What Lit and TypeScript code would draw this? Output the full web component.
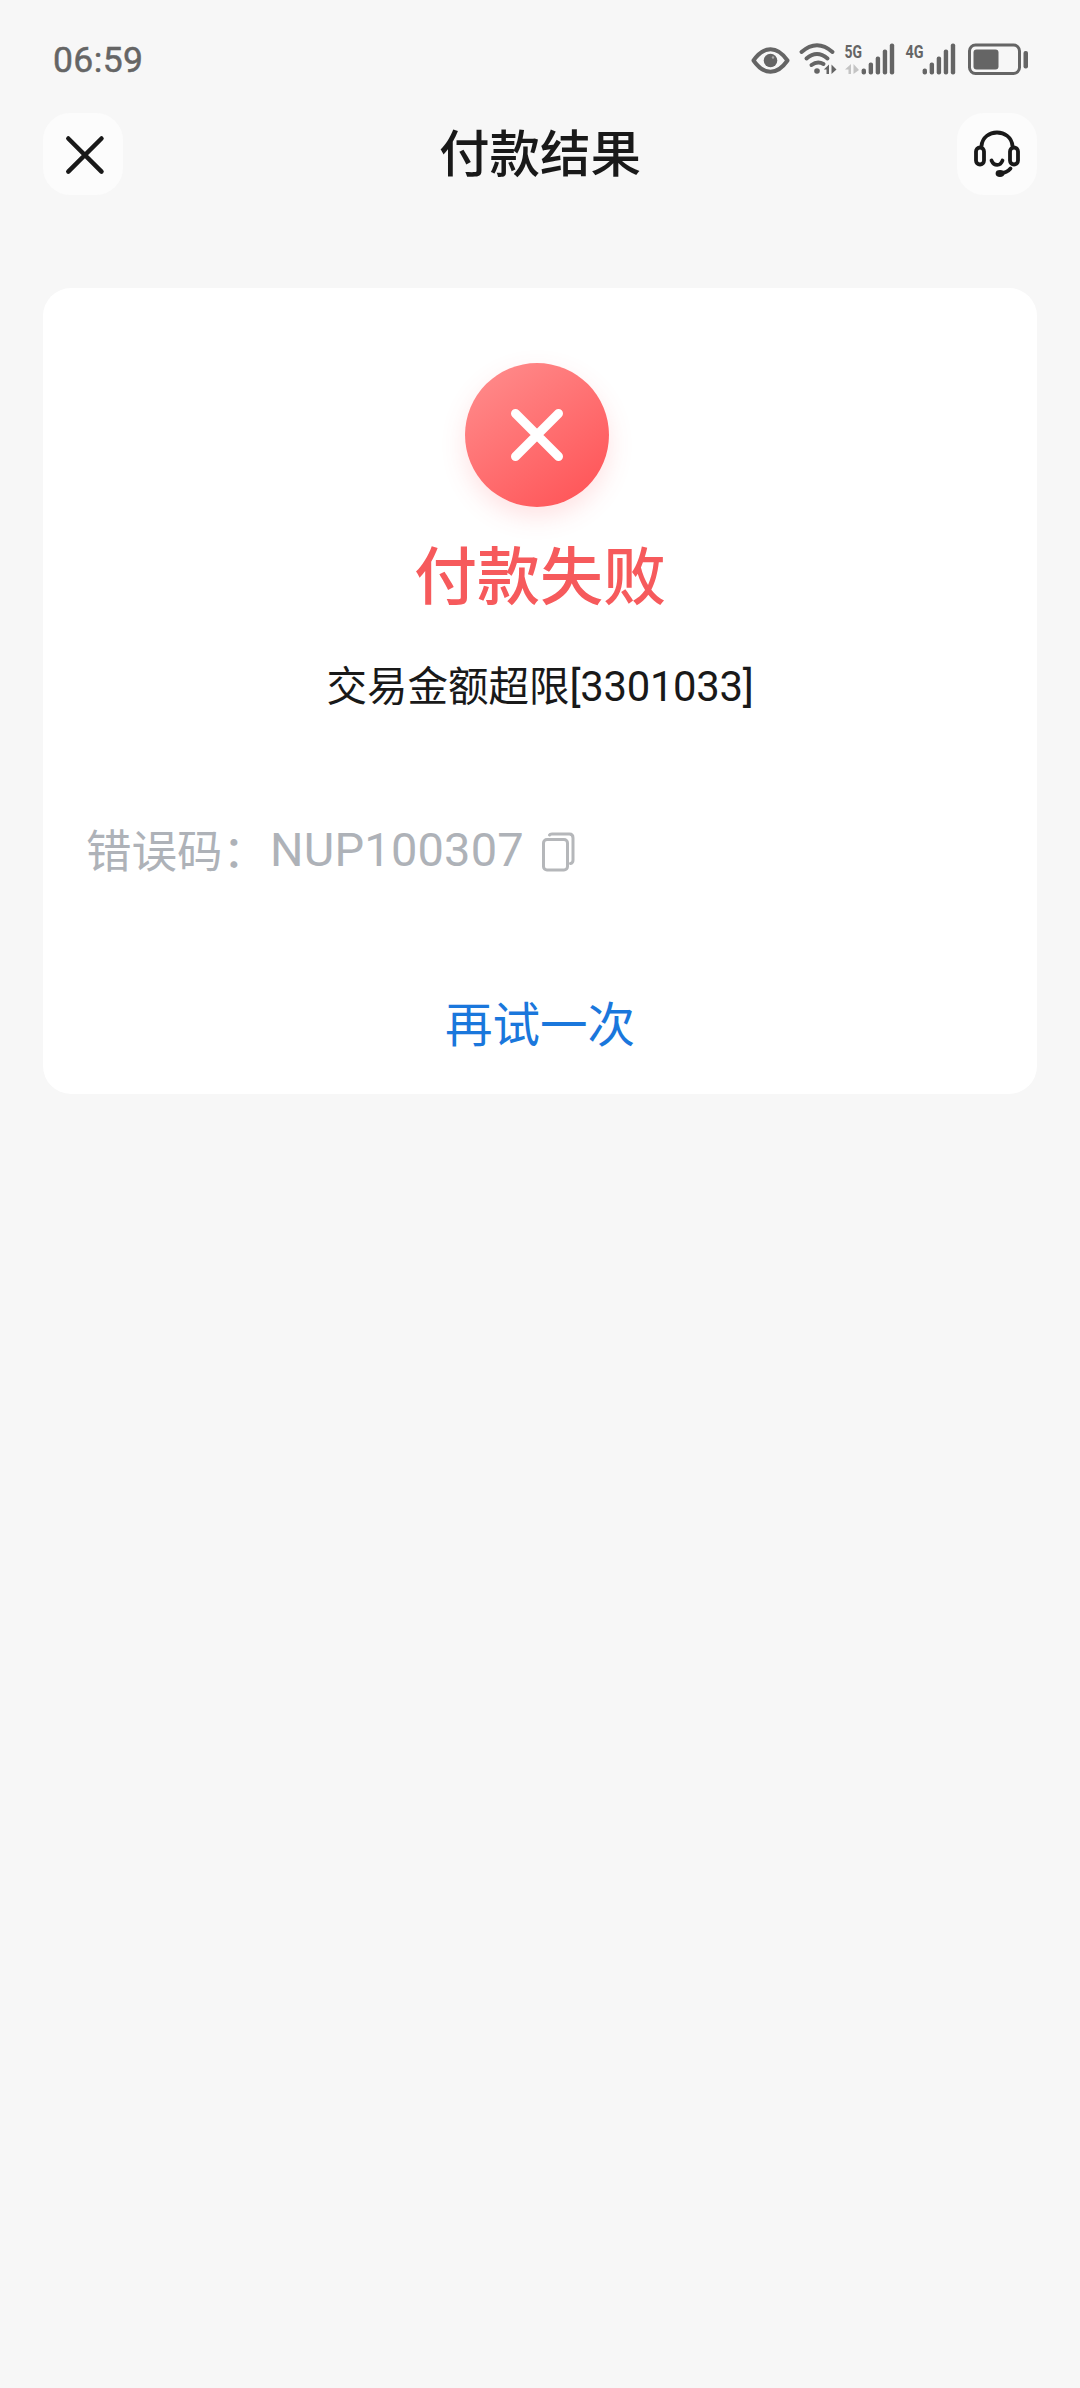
import { LitElement, html, svg, css } from "lit";
import { customElement } from "lit/decorators.js";

const bars = (x: number) =>
  [6, 12, 18, 25, 31].map(
    (h, i) => svg`<rect x=${x + i * 7.05} y=${74.5 - h} width="4.4" height=${h} rx="2" />`
  );

@customElement("status-bar")
export class StatusBar extends LitElement {
  static styles = css`
    :host {
      display: flex;
      justify-content: space-between;
      height: 110px;
      color: #656565;
    }
    .time {
      padding: 37px 0 0 53px;
      font: 400 35.5px/46px Roboto, "Noto Sans CJK SC", sans-serif;
      letter-spacing: 0.4px;
      -webkit-text-stroke: 0.5px #656565;
    }
    .icons {
      display: block;
      width: 300px;
      height: 110px;
      margin-right: 40px;
      fill: #656565;
    }
    .line {
      fill: none;
      stroke: #656565;
      stroke-linecap: round;
    }
    .faint {
      fill: #c4c4c4;
    }
    .net {
      font: 700 19px Roboto, sans-serif;
    }
  `;
  render() {
    return html`
      <span class="time">06:59</span>
      <svg class="icons" viewBox="740 0 300 110">
        <path class="line" stroke-width="4" d="M753.5 60.5C764 45.5 777 45.5 787.5 60.5C777 75.5 764 75.5 753.5 60.5Z" stroke-linejoin="round" />
        <circle cx="770.5" cy="60.500" r="6.800" />
        <circle cx="773" cy="57.500" r="1.200" fill="#aaa" />
        <path class="line" stroke-width="4" d="M801.5 52Q817 38.500 832.500 52M806.500 58.500Q817 49.500 827.500 58.500M811.500 65Q817.500 60.500 823.500 64" />
        <circle cx="817" cy="71" r="2.800" />
        <path d="M829 64.500V74H826.500V69.500H823.800ZM831.500 64.500V74L836.500 69.500Z" />
        <path class="faint" d="M851 64V74H848.500V69.500H845ZM853.500 64V74L859 70Z" />
        <text class="net" x="844.500" y="57.500" textLength="17.500" lengthAdjust="spacingAndGlyphs">5G</text>
        ${bars(861.6)}
        <text class="net" x="905.500" y="57.500" textLength="18" lengthAdjust="spacingAndGlyphs">4G</text>
        ${bars(922.6)}
        <rect class="line" x="969.500" y="45" width="50" height="28.500" rx="6" stroke-width="3" />
        <rect x="973.500" y="49.500" width="25" height="20" rx="3" />
        <rect x="1023.500" y="51" width="4.500" height="17.500" rx="2" />
      </svg>
    `;
  }
}

@customElement("nav-bar")
export class NavBar extends LitElement {
  static styles = css`
    :host {
      display: flex;
      justify-content: space-between;
      height: 90px;
      padding: 3px 43px 0;
    }
    .button {
      width: 80px;
      height: 82px;
      border-radius: 27px;
      background: #fcfcfc;
    }
    svg {
      display: block;
      fill: none;
      stroke: #191919;
      stroke-linecap: round;
    }
    .title {
      font: 500 50.5px/74px "Noto Sans CJK SC", sans-serif;
      color: #191919;
    }
  `;
  render() {
    return html`
      <div class="button">
        <svg width="80" height="82" viewBox="43 113 80 82">
          <path stroke-width="4.500" d="M68.300 138.500L101.500 171.700M101.500 138.500L68.300 171.700" />
        </svg>
      </div>
      <div class="title">付款结果</div>
      <div class="button">
        <svg width="80" height="82" viewBox="957 113 80 82" stroke-width="3.800">
          <path d="M981.500 146C983 128 1011 128 1012.500 146" />
          <rect x="976" y="147.500" width="8" height="17" rx="4" />
          <rect x="1010" y="147.500" width="8" height="17" rx="4" />
          <path d="M991.500 160.500C994 166.300 1000.500 166.300 1002.500 160.500M1010.500 168.500C1008 171.500 1004.500 173 1000 173.500" />
          <ellipse cx="1000" cy="173.500" rx="2.500" ry="1.500" />
        </svg>
      </div>
    `;
  }
}

@customElement("result-card")
export class ResultCard extends LitElement {
  static styles = css`
    :host {
      display: flex;
      flex-direction: column;
      align-items: center;
      box-sizing: border-box;
      height: 806px;
      margin: 85px 43px 0;
      padding-top: 75px;
      border-radius: 28px;
      background: #fff;
      font-family: Roboto, "Noto Sans CJK SC", sans-serif;
    }
    svg {
      display: block;
      fill: none;
      stroke-linecap: round;
    }
    .badge {
      width: 144px;
      height: 144px;
      margin-left: -7px;
      border-radius: 50%;
      background: linear-gradient(145deg, #ff8a8a 8%, #ff5558 92%);
      box-shadow: 0 10px 24px rgba(255, 85, 88, 0.17);
    }
    .status {
      margin-top: 18px;
      font: 500 63px/94px "Noto Sans CJK SC", sans-serif;
      color: #f65a5c;
    }
    .message {
      margin-top: 38px;
      font-size: 40.5px;
      line-height: 60px;
      color: #191919;
    }
    .digits {
      font-size: 41.8px;
      letter-spacing: -0.3px;
    }
    .code {
      display: flex;
      align-items: center;
      align-self: flex-start;
      height: 68px;
      margin-top: 98px;
      padding-left: 43px;
      font-size: 45.5px;
      color: #aeb2b8;
    }
    .label {
      margin-bottom: 3px;
    }
    .value {
      margin-left: 2px;
      font-size: 47px;
      letter-spacing: 0.2px;
    }
    .copy {
      margin: 5px 0 0 18px;
      stroke: #b5b7ba;
      stroke-width: 3;
    }
    .retry {
      margin-top: 108px;
      font-size: 47.5px;
      line-height: 70px;
      color: #1a77dc;
    }
  `;
  render() {
    return html`
      <div class="badge">
        <svg width="144" height="144" stroke="#fff" stroke-width="9">
          <path d="M50.500 50.500L93.500 93.500M93.500 50.500L50.500 93.500" />
        </svg>
      </div>
      <div class="status">付款失败</div>
      <div class="message">交易金额超限<span class="digits">[3301033]</span></div>
      <div class="code">
        <span class="label">错误码：</span><span class="value">NUP100307</span>
        <svg class="copy" width="34" height="40" viewBox="0 0 34 40">
          <rect x="1.500" y="7.500" width="24" height="30.500" rx="3.500" />
          <path d="M7.500 3Q8 2 10 2H27.500Q31 2 31 6V28Q31 31 28.500 31.500" />
        </svg>
      </div>
      <div class="retry">再试一次</div>
    `;
  }
}

@customElement("app-root")
export class AppRoot extends LitElement {
  static styles = css`
    :host {
      display: block;
      height: 2388px;
      overflow: hidden;
      background: #f7f7f7;
    }
  `;
  render() {
    return html`<status-bar></status-bar><nav-bar></nav-bar><result-card></result-card>`;
  }
}
